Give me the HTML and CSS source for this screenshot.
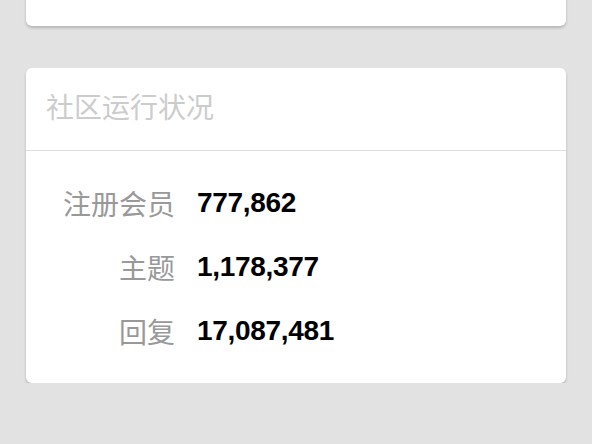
FILE: index.html
```html
<!DOCTYPE html>
<html lang="zh-CN">
<head>
  <meta charset="UTF-8" />
  <meta name="viewport" content="width=device-width, initial-scale=1.0"/>
  <title>社区运行状况</title>
  <link rel="stylesheet" href="styles.css">
</head>
<body>
  <div class="box box-prev"></div>

  <div class="box">
    <div class="box-header">社区运行状况</div>
    <div class="stats">
      <span class="stat-label">注册会员</span>
      <span class="stat-value">777,862</span>
      <span class="stat-label">主题</span>
      <span class="stat-value">1,178,377</span>
      <span class="stat-label">回复</span>
      <span class="stat-value">17,087,481</span>
    </div>
  </div>
</body>
</html>
```

FILE: styles.css
```css
* {
  box-sizing: border-box;
  margin: 0;
  padding: 0;
}

body {
  background-color: #e2e2e2;
  font-family: 'Liberation Sans', 'Noto Sans CJK SC', sans-serif;
  padding: 0 26px;
  display: flex;
  flex-direction: column;
  gap: 42px;
}

.box {
  background: #fff;
  border-radius: 6px;
  box-shadow: 0 2px 3px rgba(0, 0, 0, 0.2);
}

/* the card above, mostly scrolled off */
.box-prev {
  height: 100px;
  margin-top: -74px;
}

.box-header {
  padding: 26px 20px;
  font-size: 28px;
  line-height: 30px;
  color: #cccccc;
  border-bottom: 1px solid #dddddd;
}

.stats {
  display: grid;
  grid-template-columns: 149px auto;
  column-gap: 22px;
  padding: 20px 0;
  font-size: 28px;
  line-height: 64px;
}

.stat-label {
  text-align: right;
  color: #999999;
  font-family: 'Noto Sans CJK SC', sans-serif;
}

.stat-value {
  font-weight: bold;
  color: #000;
  letter-spacing: -0.3px;
}
```
